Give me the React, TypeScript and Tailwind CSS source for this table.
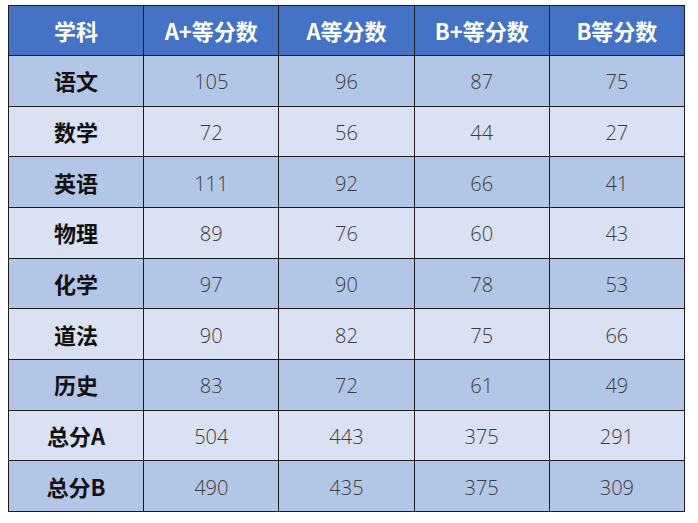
const headers = ["学科", "A+等分数", "A等分数", "B+等分数", "B等分数"];

const rows: [string, number, number, number, number][] = [
  ["语文", 105, 96, 87, 75],
  ["数学", 72, 56, 44, 27],
  ["英语", 111, 92, 66, 41],
  ["物理", 89, 76, 60, 43],
  ["化学", 97, 90, 78, 53],
  ["道法", 90, 82, 75, 66],
  ["历史", 83, 72, 61, 49],
  ["总分A", 504, 443, 375, 291],
  ["总分B", 490, 435, 375, 309],
];

// vertical line colour per column (left edge)
const leftLine = [
  "border-l-[#1c1c1c]",
  "border-l-[#1c1c1c]",
  "border-l-[#7a7a7a]",
  "border-l-[#6a6a6a]",
  "border-l-[#1c1c1c]",
];

export default function App() {
  return (
    <div className="w-[698px] h-[523px] bg-white pt-[5px] pl-[8px] font-['Noto_Sans_CJK_SC','Noto_Sans',sans-serif]">
      <table className="border-collapse table-fixed w-[677px]">
        <thead>
          <tr className="h-[50px] bg-[#4472c4]">
            {headers.map((h, i) => (
              <th
                key={h}
                className={`w-[135px] p-0 text-center text-[22px] font-bold text-white border border-[#1c1c1c] ${leftLine[i]}`}
              >
                {h}
              </th>
            ))}
          </tr>
        </thead>
        <tbody>
          {rows.map((r, ri) => (
            <tr
              key={r[0]}
              className={`h-[50.67px] ${ri % 2 === 0 ? "bg-[#b4c6e7]" : "bg-[#d9e1f2]"}`}
            >
              {r.map((c, ci) => (
                <td
                  key={ci}
                  className={`p-0 text-center border border-[#1c1c1c] ${leftLine[ci]} ${
                    ci === 0
                      ? "text-[22px] font-bold text-[#111]"
                      : "text-[20px] font-light text-[#3c3c3c] pt-[3px] font-['Open_Sans','Noto_Sans',sans-serif]"
                  }`}
                >
                  {c}
                </td>
              ))}
            </tr>
          ))}
        </tbody>
      </table>
    </div>
  );
}
